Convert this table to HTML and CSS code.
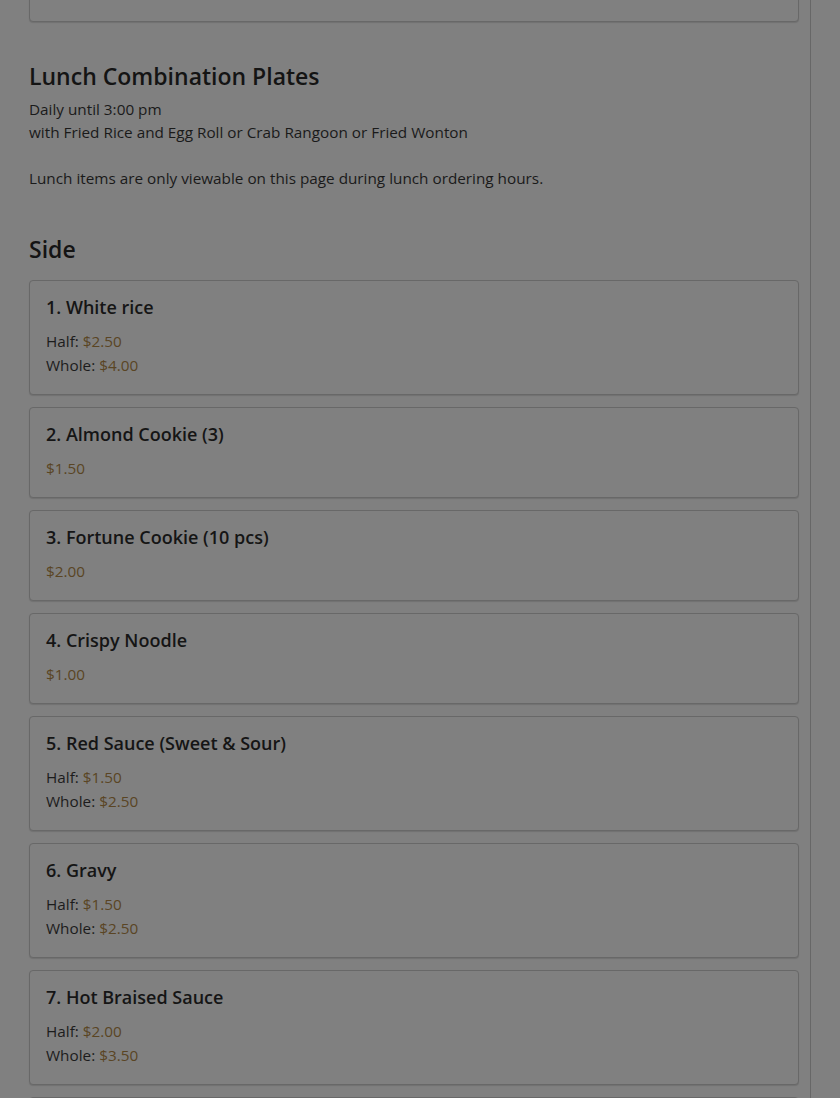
FILE: index.html
```html
<!DOCTYPE html>
<html lang="en">
<head>
<meta charset="utf-8">
<title>Menu</title>
<link rel="stylesheet" href="styles.css">
</head>
<body>
<div class="page">
  <main class="menu">
    <div class="card card-partial">
      <h3 class="item-title">Hot Sour Soup</h3>
      <div class="price-line"><span class="price">$3.50</span></div>
    </div>

    <section class="section">
      <h2 class="section-title">Lunch Combination Plates</h2>
      <p class="section-desc">Daily until 3:00 pm<br>with Fried Rice and Egg Roll or Crab Rangoon or Fried Wonton<br><br>Lunch items are only viewable on this page during lunch ordering hours.</p>
    </section>

    <section class="section">
      <h2 class="section-title section-title-side">Side</h2>
      <div class="card-list">
        <div class="card">
          <h3 class="item-title">1. White rice</h3>
          <div class="price-line">Half: <span class="price">$2.50</span></div>
          <div class="price-line">Whole: <span class="price">$4.00</span></div>
        </div>
        <div class="card">
          <h3 class="item-title">2. Almond Cookie (3)</h3>
          <div class="price-line"><span class="price">$1.50</span></div>
        </div>
        <div class="card">
          <h3 class="item-title">3. Fortune Cookie (10 pcs)</h3>
          <div class="price-line"><span class="price">$2.00</span></div>
        </div>
        <div class="card">
          <h3 class="item-title">4. Crispy Noodle</h3>
          <div class="price-line"><span class="price">$1.00</span></div>
        </div>
        <div class="card">
          <h3 class="item-title">5. Red Sauce (Sweet &amp; Sour)</h3>
          <div class="price-line">Half: <span class="price">$1.50</span></div>
          <div class="price-line">Whole: <span class="price">$2.50</span></div>
        </div>
        <div class="card">
          <h3 class="item-title">6. Gravy</h3>
          <div class="price-line">Half: <span class="price">$1.50</span></div>
          <div class="price-line">Whole: <span class="price">$2.50</span></div>
        </div>
        <div class="card">
          <h3 class="item-title">7. Hot Braised Sauce</h3>
          <div class="price-line">Half: <span class="price">$2.00</span></div>
          <div class="price-line">Whole: <span class="price">$3.50</span></div>
        </div>
        <div class="card">
          <h3 class="item-title">8. Curry Sauce</h3>
          <div class="price-line">Half: <span class="price">$2.00</span></div>
          <div class="price-line">Whole: <span class="price">$3.50</span></div>
        </div>
      </div>
    </section>
  </main>
</div>
</body>
</html>
```

FILE: styles.css
```css
html, body {
  margin: 0;
  padding: 0;
  background: #808080;
  height: 100%;
  overflow: hidden;
}

body {
  font-family: "Open Sans", "Noto Sans", "DejaVu Sans", sans-serif;
  color: #171717;
}

.page {
  width: 811px;
  min-height: 100%;
  border-right: 1px solid #676767;
  box-sizing: border-box;
}

.menu {
  padding: 0 11px 0 29px;
}

.card {
  border: 1px solid #686868;
  border-radius: 4px;
  box-shadow: 0 1px 1px rgba(0, 0, 0, 0.12);
  padding: 15px 16px 17px;
  background: #808080;
}

.card-partial {
  margin-top: -69px;
}

.card-list {
  display: flex;
  flex-direction: column;
  gap: 12px;
}

.item-title {
  margin: 0 0 11px;
  font-size: 18px;
  line-height: 22px;
  font-weight: 600;
  color: #151515;
}

.price-line {
  font-size: 15.3px;
  line-height: 24px;
  color: #1c1c1c;
}

.price {
  color: #5a4524;
}

.section-title {
  margin: 40px 0 7px;
  font-size: 23px;
  line-height: 29px;
  font-weight: 600;
  color: #141414;
}

.section-title-side {
  margin: 45px 0 16px;
}

.section-desc {
  margin: 0;
  font-size: 15.3px;
  line-height: 23px;
  color: #1a1a1a;
}
```
